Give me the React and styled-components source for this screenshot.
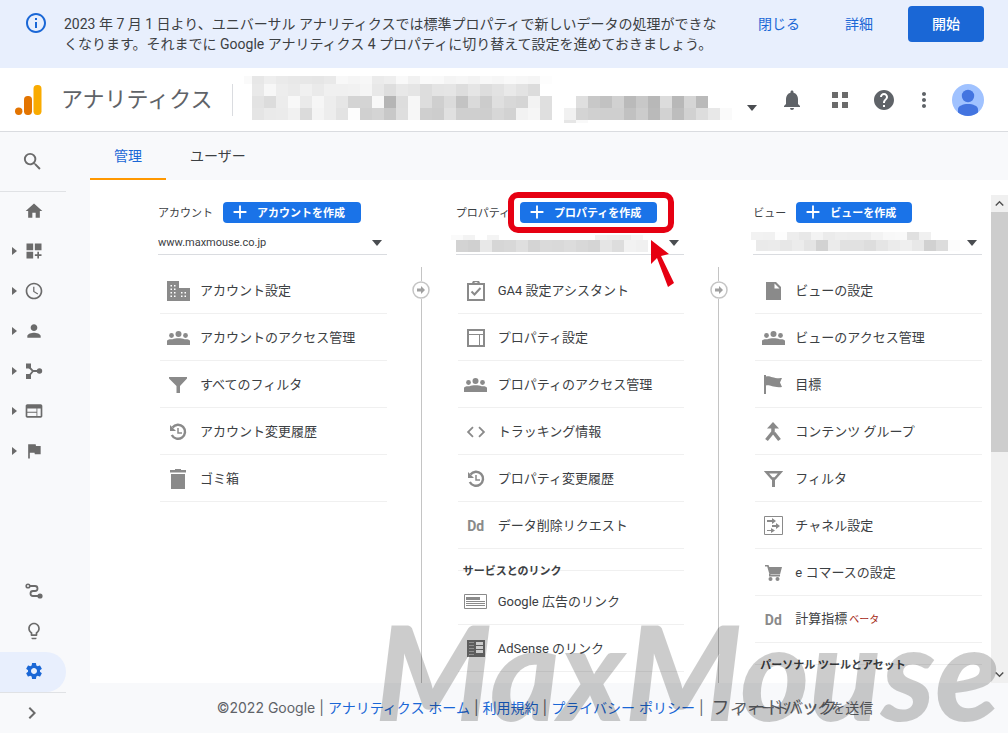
import styled, { createGlobalStyle } from "styled-components";
import {
  MdSearch,
  MdHome,
  MdDashboardCustomize,
  MdSchedule,
  MdPerson,
  MdWeb,
  MdFlag,
  MdLightbulbOutline,
  MdSettings,
  MdChevronRight,
  MdNotifications,
  MdHelp,
  MdMoreVert,
  MdInfoOutline,
  MdCode,
  MdAdd,
  MdKeyboardArrowUp,
  MdKeyboardArrowDown,
} from "react-icons/md";

const GlobalStyle = createGlobalStyle`
  *, *::before, *::after {
    box-sizing: border-box;
  }

  body {
    margin: 0;
    color: #3c4043;
    background: #f8f9fb;
    font-family: Roboto, "Noto Sans CJK JP", sans-serif;
    font-size: 13px;
  }

  button {
    padding: 0;
    border: 0;
    color: inherit;
    background: none;
    font: inherit;
    cursor: pointer;
  }

  a {
    color: inherit;
    text-decoration: none;
  }

  ul {
    margin: 0;
    padding: 0;
    list-style: none;
  }

  svg {
    display: block;
    flex: none;
  }
`;

const Page = styled.div`
  position: relative;
  display: flex;
  flex-direction: column;
  min-height: 100vh;
  overflow: hidden;
`;

/* ---------- notice ---------- */

const Banner = styled.div`
  display: flex;
  align-items: flex-start;
  height: 68px;
  padding: 0 24px;
  background: #e8effd;
  font-size: 14px;
  line-height: 20px;
`;

const BannerIcon = styled.div`
  width: 40px;
  padding-top: 11px;
  color: #1a67d6;
`;

const BannerText = styled.p`
  flex: 1;
  margin: 0;
  padding: 14px 32px 0 0;
`;

const BannerActions = styled.div`
  display: flex;
  align-items: center;
  height: 36px;
  margin-top: 6px;
  color: #1a67d6;
`;

const TextButton = styled.button`
  margin-right: ${({ $gap }) => $gap};
  line-height: 20px;
`;

const StartButton = styled.button`
  width: 76px;
  height: 36px;
  border-radius: 4px;
  color: #fff;
  background: #1a67d6;
  font-weight: 500;
`;

/* ---------- header ---------- */

const Header = styled.header`
  display: flex;
  align-items: center;
  height: 64px;
  padding: 0 16px 0 15px;
  border-bottom: 1px solid #dadce0;
  color: #5f6368;
  background: #fff;
`;

const ProductName = styled.h1`
  margin: 0;
  padding: 0 19px 0 19px;
  font-size: 22px;
  font-weight: 400;
  line-height: 32px;
  border-right: 1px solid #dadce0;
`;

const AccountPicker = styled.button`
  display: flex;
  align-items: flex-start;
  margin-left: 11px;
`;

const PickerCaret = styled.span`
  margin: 29px 0 0 16px;
`;

const HeaderTools = styled.div`
  display: flex;
  align-items: center;
  margin-left: auto;
`;

const ToolButton = styled.button`
  display: flex;
  align-items: center;
  justify-content: center;
  width: ${({ $wide }) => ($wide ? "48px" : "40px")};
  height: 40px;
`;

/* ---------- sidebar ---------- */

const Body = styled.div`
  display: flex;
  flex: 1;
`;

const Sidebar = styled.nav`
  display: flex;
  flex-direction: column;
  flex: none;
  width: 66px;
  margin-right: 24px;
  color: #6b6b6b;
`;

const SearchButton = styled.button`
  height: 60px;
  padding-left: 21px;
  border-bottom: 1px solid #e0e2e5;
`;

const SideLink = styled.a`
  display: flex;
  align-items: center;
  gap: 8px;
  height: 40px;
  padding: 0 0 2px 12px;
  border-radius: 0 20px 20px 0;
  color: ${({ $active }) => ($active ? "#1a67d6" : "inherit")};
  background: ${({ $active }) => ($active ? "#e8effd" : "none")};
`;

const CaretSlot = styled.span`
  width: 4px;
`;

const SideBottom = styled.div`
  margin-top: auto;
`;

const ExpandButton = styled.button`
  display: block;
  width: 100%;
  height: 41px;
  padding-left: 20px;
  border-top: 1px solid #e0e2e5;
`;

/* ---------- content ---------- */

const Main = styled.main`
  display: flex;
  flex-direction: column;
  flex: 1;
  min-width: 0;
`;

const Tabs = styled.div`
  display: flex;
  height: 48px;
  font-size: 14px;
`;

const Tab = styled.button`
  padding: 0 24px;
  border-bottom: 2px solid ${({ $active }) => ($active ? "#ff9800" : "transparent")};
  color: ${({ $active }) => ($active ? "#1a67d6" : "#3c4043")};
`;

const Panel = styled.div`
  display: flex;
  flex: 1;
  padding-top: 15px;
  background: #fff;
`;

const Columns = styled.div`
  display: grid;
  flex: 1;
  grid-template-columns: 1fr 69px 1fr 69px 1fr;
  padding: 0 9px 0 68px;
`;

const Column = styled.section`
  min-width: 0;
  padding-top: 7px;
`;

const ColumnHead = styled.div`
  display: flex;
  align-items: center;
  gap: 10px;
  height: 21px;
  font-size: 11px;
`;

const ColumnTitle = styled.h2`
  margin: 0;
  padding-bottom: 2px;
  font-size: 11px;
  font-weight: 400;
  white-space: nowrap;
`;

const CreateWrap = styled.div`
  position: relative;
`;

const CreateButton = styled.button`
  display: flex;
  align-items: center;
  gap: 6px;
  height: 21px;
  padding: 0 16px 2px 6px;
  border-radius: 4px;
  color: #fff;
  background: #1a73e8;
  font-weight: 700;
  white-space: nowrap;
`;

const Highlight = styled.div`
  position: absolute;
  inset: -10px -17px -10px -12px;
  border: 6px solid #e60012;
  border-radius: 10px;
  pointer-events: none;
`;

const Pointer = styled.svg`
  position: absolute;
  top: 38px;
  right: -19px;
  pointer-events: none;
`;

const SelectRow = styled.div`
  display: flex;
  align-items: center;
  height: 32px;
  margin-bottom: 12px;
  padding: 8px 5px 0 0;
  border-bottom: 1px solid #dadce0;
  font-size: 11px;
`;

const AccountSelect = styled.select`
  flex: 1;
  min-width: 0;
  height: 23px;
  padding: 0;
  border: 0;
  color: #3c4043;
  background: none;
  font: inherit;
  appearance: none;
`;

const MosaicSelect = styled.button`
  flex: 1;
  height: 23px;
`;

const MenuLink = styled.a`
  display: flex;
  align-items: center;
  gap: 9px;
  height: 47px;
  margin-left: 2px;
  padding: 1px 0 0 5px;
  border-bottom: 1px solid #f0f0f0;
  line-height: 20px;
  white-space: nowrap;
`;

const MenuIcon = styled.span`
  display: flex;
  justify-content: center;
  flex: none;
  width: 26px;
  color: #8a8a8a;
`;

const Dd = styled.span`
  color: #8a8a8a;
  font-size: 14px;
  font-weight: 700;
`;

const Beta = styled.span`
  margin-left: 2px;
  color: #a52714;
  font-size: 10px;
`;

const GroupTitle = styled.h3`
  display: flex;
  align-items: center;
  height: 29px;
  margin: 0 0 0 2px;
  padding: 17px 0 0 5px;
  background: linear-gradient(#f0f0f0, #f0f0f0) 0 21px / 100% 1px no-repeat;
  font-size: 11px;
  line-height: 12px;
`;

const Divider = styled.div`
  display: flex;
  flex-direction: column;
  align-items: center;
  margin-top: 72px;
`;

const DividerLine = styled.span`
  width: 1px;
  flex: ${({ $height }) => ($height ? `0 0 ${$height}` : "1")};
  background: #c4c4c4;
`;

const ScrollBar = styled.div`
  display: flex;
  flex-direction: column;
  justify-content: space-between;
  width: 17px;
  background: #f0f0f0;
  color: #505050;
`;

const ScrollButton = styled.button`
  width: 17px;
  height: 17px;
`;

const ScrollThumb = styled.div`
  height: 240px;
  margin-bottom: auto;
  background: #cdcdcd;
`;

/* ---------- footer ---------- */

const Footer = styled.footer`
  display: flex;
  align-items: center;
  justify-content: center;
  gap: 4px;
  height: 50px;
  padding: 0 8px 2px 0;
  color: #5f6368;
  font-family: Inter, "Noto Sans CJK JP", sans-serif;
  font-size: 14px;
  white-space: nowrap;
`;

const FooterLink = styled.a`
  color: #1a67d6;
`;

const Feedback = styled.button`
  position: relative;
  margin-left: 26px;
`;

const FeedbackEcho = styled.span`
  position: absolute;
  top: -3px;
  left: -22px;
  font-size: 18px;
  line-height: 28px;
`;

const Watermark = styled.div`
  position: absolute;
  right: 8px;
  bottom: -1px;
  color: rgba(0, 0, 0, 0.2);
  font-family: Lato, sans-serif;
  font-size: 132px;
  font-style: italic;
  font-weight: 900;
  line-height: 128px;
  pointer-events: none;
`;

/* ---------- drawings ---------- */

// Each row is [x, y, height, grey levels]; a cell is one grey level wide.
const MosaicSvg = styled.svg`
  overflow: visible;
`;

const Mosaic = ({ width, height, rows, cell = 12 }) => (
  <MosaicSvg width={width} height={height} shapeRendering="crispEdges" aria-hidden="true">
    {rows.map(([x, y, h, cells]) =>
      cells.split(" ").map((c, i) => (
        <rect key={`${x}-${y}-${i}`} x={x + i * cell} y={y} width={cell} height={h} fill={`#${c}${c}${c}`} />
      ))
    )}
  </MosaicSvg>
);

const HEADER_MOSAIC = [
  [0, 0, 8, "fa"],
  [8, 0, 8, "e7 ee ea e8 e7 e6 e9 f8 f5 f7 eb ee f9 f1 fa f9 f4 f6 f3 f8 f6 f9 f7 f5 fd"],
  [8, 8, 12, "e9 f7 ed ea f0 ea f0 f0 f1 f5 e8 de e8 e5 dd e4 e5 dd e5 dd e2 e9 e3 dc"],
  [8, 20, 12, "e3 dc ec f8 ea f6 ed e6 d4 d4 f8 b5 dd f7 dd cf db c3 da cc df d8 d5 f3 df"],
  [8, 32, 12, "e5 ea eb f1 db f4 ed e3 fd d0 d4 c8 de f7 cf cd e0 cf cf ce d7 d2 f2 f6 df"],
  [332, 20, 12, "df c8 c2 d1 ba c8 b8 dc b8 d5 ba"],
  [320, 32, 12, "f1 d4 d0 cf cf c1 cc ba d2 bd d1 dd e8 fa"],
  [320, 44, 3, "e6 f9"],
];

const PROPERTY_MOSAIC = [
  [-5, 4, 5, "fa f3 ff f4 ff ff ff ff ff ff ff ff f0 ee ed f6"],
  [0, 9, 12, "d3 d0 e8 d6 d8 df d4 da d9 dc d8 d5 e5 dd f2 f0"],
];

const VIEW_MOSAIC = [
  [-2, 1, 8, "f2 f1 fd ed e8 f3 eb ee ed ed f3 f8 f9 e0 f0"],
  [3, 9, 11, "ea eb e7 ec e4 d2 eb e1 e1 dd e5 eb ef e8 d1 dc fc"],
];

const Caret = () => (
  <svg width="10" height="6" viewBox="0 0 10 6">
    <path d="M0 0h10L5 6z" fill="#4a4d51" />
  </svg>
);

const SideCaret = () => (
  <svg width="5" height="8" viewBox="0 0 5 8">
    <path d="M0 0v8l5-4z" fill="#6b6b6b" />
  </svg>
);

const AnalyticsLogo = () => (
  <svg width="27" height="30" viewBox="0 0 27 30">
    <rect x="18.500" width="8" height="30" rx="3.700" fill="#f9ab00" />
    <rect x="9" y="11" width="8" height="19" rx="3.700" fill="#e37400" />
    <circle cx="3.700" cy="26.300" r="3.700" fill="#e37400" />
  </svg>
);

const AppsIcon = () => (
  <svg width="16" height="16" viewBox="0 0 16 16" fill="#6b6b6b">
    <path d="M0 0h6v6H0zM10 0h6v6h-6zM0 10h6v6H0zM10 10h6v6h-6z" />
  </svg>
);

const Avatar = () => (
  <svg width="32" height="32" viewBox="0 0 32 32">
    <circle cx="16" cy="16" r="16" fill="#a0c2ff" />
    <circle cx="16" cy="12" r="6.200" fill="#4374e0" />
    <path d="M6 28.500V25c0-3 5-5 10-5s10 2 10 5v3.500A16 16 0 0 1 16 32a16 16 0 0 1-10-3.500z" fill="#4374e0" />
  </svg>
);

const AcquisitionIcon = () => (
  <svg width="20" height="20" viewBox="0 0 20 20" fill="currentColor">
    <path d="M2 2.500h5v5H2zM2 13h5v5H2z" />
    <circle cx="15.500" cy="10" r="2.700" />
    <path d="M5 6l4 4-4 5M9 10h6" fill="none" stroke="currentColor" strokeWidth="1.800" />
  </svg>
);

const RouteIcon = () => (
  <svg width="20" height="20" viewBox="0 0 20 20">
    <circle cx="4" cy="5" r="1.800" fill="none" stroke="currentColor" strokeWidth="1.600" />
    <circle cx="16" cy="15" r="2.600" fill="currentColor" />
    <path d="M6 5h5a2.500 2.500 0 0 1 0 5H9a2.500 2.500 0 0 0 0 5h6" fill="none" stroke="currentColor" strokeWidth="1.800" />
  </svg>
);

const BuildingIcon = () => (
  <svg width="23" height="20" viewBox="0 0 23 20">
    <path d="M0 0h12v7h11v13H0z" fill="currentColor" />
    <path
      d="M3.500 4h1.500v1.500H3.500zM7 4h1.500v1.500H7zM3.500 7.500h1.500v1.500H3.500zM7 7.500h1.500v1.500H7zM3.500 11h1.500v1.500H3.500zM7 11h1.500v1.500H7zM3.500 14.500h1.500v1.500H3.500zM7 14.500h1.500v1.500H7zM14 11h1.500v1.500H14zM17.500 11h1.500v1.500h-1.500zM14 14.500h1.500v1.500H14zM17.500 14.500h1.500v1.500h-1.500z"
      fill="#fff"
    />
  </svg>
);

const PeopleIcon = () => (
  <svg width="23" height="14" viewBox="0 0 23 14" fill="currentColor">
    <circle cx="11.500" cy="3" r="3" />
    <circle cx="4.500" cy="4.500" r="2.400" />
    <circle cx="18.500" cy="4.500" r="2.400" />
    <path d="M0 14v-4c0-1.500 3-2 5.500-1.700C7 7.500 9 7.200 11.500 7.200s4.500.3 6 1.100C20 8 23 8.500 23 10v4z" />
  </svg>
);

const FunnelIcon = () => (
  <svg width="18" height="16" viewBox="0 0 18 16" fill="currentColor">
    <path d="M0 0h18v1.500L11 9v7H7.500V9L0 1.500z" />
  </svg>
);

const HistoryIcon = () => (
  <svg width="18" height="18" viewBox="0 0 18 18" fill="none" stroke="currentColor">
    <path d="M3.500 4.500A7 7 0 1 1 2.800 12" strokeWidth="2.400" />
    <path d="M1 2v6h6z" fill="currentColor" stroke="none" />
    <path d="M9 5v5h4" strokeWidth="1.500" />
  </svg>
);

const TrashIcon = () => (
  <svg width="16" height="20" viewBox="0 0 16 20" fill="currentColor">
    <path d="M5 0h6v1h5v2.500H0V1h5zM1 5h14v15H1z" />
  </svg>
);

const FileIcon = () => (
  <svg width="15" height="18" viewBox="0 0 15 18">
    <path d="M0 0h10l5 5v13H0z" fill="currentColor" />
    <path d="M8.500 1.500V6.500H13.500z" fill="#fff" />
  </svg>
);

const CartIcon = () => (
  <svg width="17" height="16" viewBox="0 0 17 16" fill="currentColor">
    <path d="M0 0h3.500l.8 2H17l-2 7.500H4.500L2.200 1.500H0zM4 9h1.500v1H15v1.500H4z" />
    <circle cx="5.500" cy="14" r="2" />
    <circle cx="12.500" cy="14" r="2" />
  </svg>
);

const ClipboardIcon = () => (
  <svg width="18" height="20" viewBox="0 0 18 20" fill="none" stroke="currentColor" strokeWidth="2">
    <path d="M1 3h16v16H1z" />
    <path d="M6 3a3 3 0 0 1 6 0" />
    <path d="M4.500 10.500l3 3 6-6.500" />
  </svg>
);

const LayoutIcon = () => (
  <svg width="18" height="18" viewBox="0 0 18 18" fill="none" stroke="currentColor">
    <path d="M1 1h16v16H1z" strokeWidth="2" />
    <path d="M2 5.500h14M12.500 6v10" />
  </svg>
);

const AdsIcon = () => (
  <svg width="23" height="15" viewBox="0 0 23 15">
    <path d="M.5.5h22v14H.5z" fill="none" stroke="currentColor" />
    <path d="M2 3h14v3H2zM2 7h19v1H2zM2 9h19v1H2zM2 11h19v1H2z" fill="currentColor" />
  </svg>
);

const AdSenseIcon = () => (
  <svg width="18" height="17" viewBox="0 0 18 17">
    <path d="M0 0h18v17H0z" fill="#757575" />
    <path d="M9 2h7v3H9zM9 6h7v3H9zM9 10h7v3H9z" fill="#fff" />
    <path d="M2 2.500h5M2 5.500h5M2 8.500h5M2 11.500h5M2 14.500h5" stroke="#b5b5b5" />
  </svg>
);

const WavyFlagIcon = () => (
  <svg width="18" height="19" viewBox="0 0 18 19" fill="currentColor">
    <path d="M0 0h2v1.500c4-1.500 7 2.500 16 1.500l-2 4.500 2 4.500c-9 1-12-2.500-16-1.500V19H0z" />
  </svg>
);

const MergeIcon = () => (
  <svg width="18" height="20" viewBox="0 0 18 20">
    <path d="M9 0l6 6.500H3z" fill="currentColor" />
    <path d="M9 5v5L2.500 18M10 11l5.500 7" fill="none" stroke="currentColor" strokeWidth="3.500" />
  </svg>
);

const FunnelOutlineIcon = () => (
  <svg width="19" height="16" viewBox="0 0 19 16">
    <path d="M2.500 1.200h14L11 7.500H8z" fill="none" stroke="currentColor" strokeWidth="2.400" />
    <path d="M8 7h3v9H8z" fill="currentColor" />
  </svg>
);

const ChannelIcon = () => (
  <svg width="19" height="19" viewBox="0 0 19 19">
    <path d="M.5.5h18v18H.5z" fill="none" stroke="currentColor" />
    <path d="M3 4h5V2l4 3-4 3V6H3zM8 9h4V7l4 3-4 3v-2H8zM3 14h4v-2l4 2.500L7 17v-2H3z" fill="currentColor" />
  </svg>
);

const NodeIcon = () => (
  <svg width="18" height="18" viewBox="0 0 18 18">
    <circle cx="9" cy="9" r="8" fill="#fff" stroke="#c4c4c4" strokeWidth="1.500" />
    <path d="M5 7.500h4V5l4 4-4 4v-2.500H5z" fill="#a0a0a0" />
  </svg>
);

/* ---------- data ---------- */

const SIDE_ITEMS = [
  { label: "ホーム", icon: <MdHome size={20} />, leaf: true },
  { label: "カスタム", icon: <MdDashboardCustomize size={20} /> },
  { label: "リアルタイム", icon: <MdSchedule size={20} /> },
  { label: "ユーザー", icon: <MdPerson size={20} /> },
  { label: "集客", icon: <AcquisitionIcon /> },
  { label: "行動", icon: <MdWeb size={20} /> },
  { label: "コンバージョン", icon: <MdFlag size={20} /> },
];

const SIDE_BOTTOM_ITEMS = [
  { label: "アトリビューション", icon: <RouteIcon />, leaf: true },
  { label: "発見", icon: <MdLightbulbOutline size={20} />, leaf: true },
  { label: "管理", icon: <MdSettings size={20} />, leaf: true, active: true },
];

const ACCOUNT_ITEMS = [
  { label: "アカウント設定", icon: <BuildingIcon /> },
  { label: "アカウントのアクセス管理", icon: <PeopleIcon /> },
  { label: "すべてのフィルタ", icon: <FunnelIcon /> },
  { label: "アカウント変更履歴", icon: <HistoryIcon /> },
  { label: "ゴミ箱", icon: <TrashIcon /> },
];

const PROPERTY_ITEMS = [
  { label: "GA4 設定アシスタント", icon: <ClipboardIcon /> },
  { label: "プロパティ設定", icon: <LayoutIcon /> },
  { label: "プロパティのアクセス管理", icon: <PeopleIcon /> },
  { label: "トラッキング情報", icon: <MdCode size={22} /> },
  { label: "プロパティ変更履歴", icon: <HistoryIcon /> },
  { label: "データ削除リクエスト", icon: <Dd>Dd</Dd> },
];

const PROPERTY_LINKS = [
  { label: "Google 広告のリンク", icon: <AdsIcon /> },
  { label: "AdSense のリンク", icon: <AdSenseIcon /> },
];

const VIEW_ITEMS = [
  { label: "ビューの設定", icon: <FileIcon /> },
  { label: "ビューのアクセス管理", icon: <PeopleIcon /> },
  { label: "目標", icon: <WavyFlagIcon /> },
  { label: "コンテンツ グループ", icon: <MergeIcon /> },
  { label: "フィルタ", icon: <FunnelOutlineIcon /> },
  { label: "チャネル設定", icon: <ChannelIcon /> },
  { label: "e コマースの設定", icon: <CartIcon /> },
  { label: "計算指標", icon: <Dd>Dd</Dd>, beta: true },
];

const SideList = ({ items }) => (
  <ul>
    {items.map(({ label, icon, leaf, active }) => (
      <li key={label}>
        <SideLink href="#" aria-label={label} $active={active}>
          <CaretSlot>{!leaf && <SideCaret />}</CaretSlot>
          {icon}
        </SideLink>
      </li>
    ))}
  </ul>
);

const Menu = ({ items }) => (
  <ul>
    {items.map(({ label, icon, beta }) => (
      <li key={label}>
        <MenuLink href="#">
          <MenuIcon>{icon}</MenuIcon>
          <span>
            {label}
            {beta && <Beta>ベータ</Beta>}
          </span>
        </MenuLink>
      </li>
    ))}
  </ul>
);

const Create = ({ children }) => (
  <CreateButton>
    <MdAdd size={22} />
    {children}
  </CreateButton>
);

const ColumnDivider = () => (
  <Divider>
    <DividerLine $height="14px" />
    <NodeIcon />
    <DividerLine />
  </Divider>
);

const App = () => {
  return (
    <Page>
      <GlobalStyle />
      <Banner>
        <BannerIcon>
          <MdInfoOutline size={24} />
        </BannerIcon>
        <BannerText>
          2023 年 7 月 1 日より、ユニバーサル アナリティクスでは標準プロパティで新しいデータの処理ができなくなります。それまでに
          Google アナリティクス 4 プロパティに切り替えて設定を進めておきましょう。
        </BannerText>
        <BannerActions>
          <TextButton $gap="45px">閉じる</TextButton>
          <TextButton $gap="35px">詳細</TextButton>
          <StartButton>開始</StartButton>
        </BannerActions>
      </Banner>

      <Header>
        <AnalyticsLogo />
        <ProductName>アナリティクス</ProductName>
        <AccountPicker aria-label="アカウントを選択">
          <Mosaic width={487} height={47} rows={HEADER_MOSAIC} />
          <PickerCaret>
            <Caret />
          </PickerCaret>
        </AccountPicker>
        <HeaderTools>
          <ToolButton $wide aria-label="通知">
            <MdNotifications size={24} />
          </ToolButton>
          <ToolButton $wide aria-label="アプリ">
            <AppsIcon />
          </ToolButton>
          <ToolButton aria-label="ヘルプ">
            <MdHelp size={24} />
          </ToolButton>
          <ToolButton aria-label="その他">
            <MdMoreVert size={24} />
          </ToolButton>
          <ToolButton $wide aria-label="プロフィール">
            <Avatar />
          </ToolButton>
        </HeaderTools>
      </Header>

      <Body>
        <Sidebar>
          <SearchButton aria-label="検索">
            <MdSearch size={23} />
          </SearchButton>
          <SideList items={SIDE_ITEMS} />
          <SideBottom>
            <SideList items={SIDE_BOTTOM_ITEMS} />
            <ExpandButton aria-label="メニューを開く">
              <MdChevronRight size={24} />
            </ExpandButton>
          </SideBottom>
        </Sidebar>

        <Main>
          <Tabs>
            <Tab $active>管理</Tab>
            <Tab>ユーザー</Tab>
          </Tabs>

          <Panel>
            <Columns>
              <Column>
                <ColumnHead>
                  <ColumnTitle>アカウント</ColumnTitle>
                  <Create>アカウントを作成</Create>
                </ColumnHead>
                <SelectRow>
                  <AccountSelect aria-label="アカウント">
                    <option>www.maxmouse.co.jp</option>
                  </AccountSelect>
                  <Caret />
                </SelectRow>
                <Menu items={ACCOUNT_ITEMS} />
              </Column>

              <ColumnDivider />

              <Column>
                <ColumnHead>
                  <ColumnTitle>プロパティ</ColumnTitle>
                  <CreateWrap>
                    <Create>プロパティを作成</Create>
                    <Highlight />
                    <Pointer width="26" height="47" viewBox="0 0 26 47">
                      <path d="M1 0l18 14-8 2 13 27-6 4L7 18l-6 6z" fill="#e60012" />
                    </Pointer>
                  </CreateWrap>
                </ColumnHead>
                <SelectRow>
                  <MosaicSelect aria-label="プロパティ">
                    <Mosaic width={198} height={23} rows={PROPERTY_MOSAIC} />
                  </MosaicSelect>
                  <Caret />
                </SelectRow>
                <Menu items={PROPERTY_ITEMS} />
                <GroupTitle>サービスとのリンク</GroupTitle>
                <Menu items={PROPERTY_LINKS} />
              </Column>

              <ColumnDivider />

              <Column>
                <ColumnHead>
                  <ColumnTitle>ビュー</ColumnTitle>
                  <Create>ビューを作成</Create>
                </ColumnHead>
                <SelectRow>
                  <MosaicSelect aria-label="ビュー">
                    <Mosaic width={198} height={23} rows={VIEW_MOSAIC} />
                  </MosaicSelect>
                  <Caret />
                </SelectRow>
                <Menu items={VIEW_ITEMS} />
                <GroupTitle>パーソナル ツールとアセット</GroupTitle>
              </Column>
            </Columns>

            <ScrollBar>
              <ScrollButton aria-label="上へ">
                <MdKeyboardArrowUp size={17} />
              </ScrollButton>
              <ScrollThumb />
              <ScrollButton aria-label="下へ">
                <MdKeyboardArrowDown size={17} />
              </ScrollButton>
            </ScrollBar>
          </Panel>

          <Footer>
            <span>©2022 Google</span>
            <span>|</span>
            <FooterLink href="#">アナリティクス ホーム</FooterLink>
            <span>|</span>
            <FooterLink href="#">利用規約</FooterLink>
            <span>|</span>
            <FooterLink href="#">プライバシー ポリシー</FooterLink>
            <span>|</span>
            <Feedback>
              フィードバックを送信
              <FeedbackEcho aria-hidden="true">フィードバック</FeedbackEcho>
            </Feedback>
          </Footer>
        </Main>
      </Body>

      <Watermark aria-hidden="true">MaxMouse</Watermark>
    </Page>
  );
};

export default App;
